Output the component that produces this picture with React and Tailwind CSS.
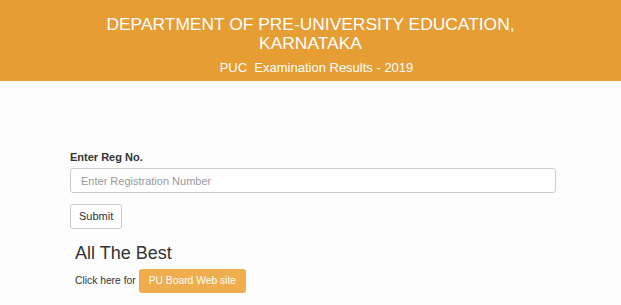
export default function App() {
    return <div className="min-h-[305px] bg-[#fdfdfd] font-['Liberation_Sans',Arial,sans-serif]">
        <div className="bg-[#e69d34] text-white text-center pt-[15px] h-[81px]">
            <h1 className="text-[17.4px] leading-[19px] font-normal">DEPARTMENT OF PRE-UNIVERSITY EDUCATION,<br/>KARNATAKA</h1>
            <p className="text-[13px] leading-[15px] mt-[7px] pl-[12px]">PUC&nbsp; Examination Results - 2019</p>
        </div>
        <div className="pl-[70px] pr-[65px] pt-[70px]">
            <label className="block text-[11px] font-bold text-[#333] leading-[13px]">Enter Reg No.</label>
            <input type="text" placeholder="Enter Registration Number"
                   className="mt-[4px] block w-full h-[25px] px-[10px] text-[11px] border border-[#ccc] rounded-[3px] bg-white placeholder:text-[#999] outline-none"/>
            <button className="mt-[11px] h-[25px] px-[8px] text-[11px] text-[#333] bg-white border border-[#ccc] rounded-[3px]">Submit</button>
            <div className="pl-[5px]">
                <h2 className="mt-[13px] text-[18px] leading-[22px] text-[#333]">All The Best</h2>
                <div className="mt-[5px] flex items-center gap-[3px] text-[10.3px] text-[#333]">
                    <span>Click here for</span>
                    <a className="h-[24px] px-[10px] flex items-center rounded-[3px] bg-[#efad4e] text-white">PU Board Web site</a>
                </div>
            </div>
        </div>
    </div>
}
